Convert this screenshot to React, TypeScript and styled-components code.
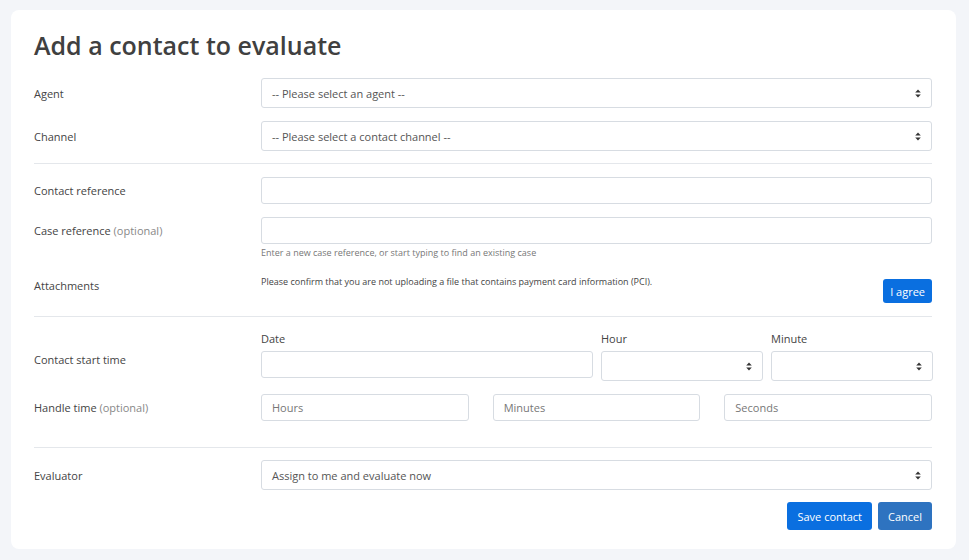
import styled, { createGlobalStyle } from "styled-components";

const GlobalStyle = createGlobalStyle`
  html, body {
    margin: 0;
    padding: 0;
    background: #f3f5f9;
    font-family: "Open Sans", "Liberation Sans", sans-serif;
    color: #444;
  }
  * { box-sizing: border-box; }
`;

const Page = styled.div`
  padding: 10px 13px 11px 11px;
  height: 560px;
`;

const Card = styled.div`
  background: #fff;
  border-radius: 8px;
  padding: 20px 24px 19px 23px;
  height: 539px;
`;

const Title = styled.h1`
  margin: 0 0 18px;
  font-size: 25px;
  font-weight: 600;
  color: #404040;
  line-height: 30px;
`;

const Row = styled.div<{ $mt?: number }>`
  display: grid;
  grid-template-columns: 227px 1fr;
  align-items: center;
  margin-top: ${({ $mt }) => $mt ?? 0}px;
`;

const Label = styled.div<{ $top?: number }>`
  font-size: 11px;
  color: #444;
  ${({ $top }) => ($top !== undefined ? `align-self: start; margin-top: ${$top}px;` : "")}
`;

const Optional = styled.span`
  color: #888;
`;

const Divider = styled.hr<{ $mt: number; $mb: number }>`
  border: 0;
  border-top: 1px solid #e4e7eb;
  margin: ${({ $mt, $mb }) => `${$mt}px 0 ${$mb}px`};
`;

const SelectBox = styled.div<{ $h?: number }>`
  height: ${({ $h }) => $h ?? 30}px;
  border: 1px solid #d7dce2;
  border-radius: 3px;
  display: flex;
  align-items: center;
  justify-content: space-between;
  padding: 0 10px 0 10px;
  font-size: 11px;
  color: #555;
  background: #fff;
`;

const TextBox = styled.div<{ $h?: number }>`
  height: ${({ $h }) => $h ?? 27}px;
  border: 1px solid #d7dce2;
  border-radius: 3px;
  display: flex;
  align-items: center;
  padding: 0 10px;
  font-size: 11px;
  color: #777;
  background: #fff;
`;

const Help = styled.div`
  font-size: 9px;
  color: #777;
  margin-top: 2px;
`;

const AttachRow = styled.div`
  display: flex;
  justify-content: space-between;
  align-items: flex-start;
`;

const Notice = styled.div`
  font-size: 9px;
  color: #444;
  margin-top: 3px;
`;

const Button = styled.button<{ $variant?: "primary" | "secondary" }>`
  font-family: inherit;
  border: 0;
  border-radius: 3px;
  color: #fff;
  font-size: 11px;
  height: 28px;
  padding: 0 10px;
  background: ${({ $variant }) => ($variant === "secondary" ? "#2e73c0" : "#0a6fe0")};
  cursor: pointer;
`;

const SmallButton = styled(Button)`
  height: 24px;
  padding: 0 7px;
  margin-top: 7px;
`;

const TimeGrid = styled.div`
  display: grid;
  grid-template-columns: 332px 162px 162px;
  column-gap: 8px;
  align-items: start;
`;

const Field = styled.div`
  display: flex;
  flex-direction: column;
`;

const FieldLabel = styled.div`
  font-size: 11px;
  color: #444;
  margin-bottom: 5px;
`;

const HandleGrid = styled.div`
  display: grid;
  grid-template-columns: 1fr 1fr 1fr;
  column-gap: 24px;
`;

const Actions = styled.div`
  display: flex;
  justify-content: flex-end;
  gap: 6px;
  margin-top: 12px;
`;

const Caret = () => (
  <svg width="6" height="9" viewBox="0 0 6 9" aria-hidden="true">
    <path d="M3 0.5 L5.8 3.6 L0.2 3.6 Z" fill="#333" />
    <path d="M0.2 5.4 L5.8 5.4 L3 8.5 Z" fill="#333" />
  </svg>
);

const Select = ({ text, h }: { text?: string; h?: number }) => (
  <SelectBox $h={h}>
    <span>{text}</span>
    <Caret />
  </SelectBox>
);

export default function App() {
  return (
    <>
      <GlobalStyle />
      <Page>
        <Card>
          <Title>Add a contact to evaluate</Title>
          <Row>
            <Label>Agent</Label>
            <Select text="-- Please select an agent --" />
          </Row>
          <Row $mt={13}>
            <Label>Channel</Label>
            <Select text="-- Please select a contact channel --" />
          </Row>
          <Divider $mt={12} $mb={13} />
          <Row>
            <Label>Contact reference</Label>
            <TextBox />
          </Row>
          <Row $mt={13}>
            <Label>
              Case reference <Optional>(optional)</Optional>
            </Label>
            <TextBox />
          </Row>
          <Row>
            <div />
            <Help>Enter a new case reference, or start typing to find an existing case</Help>
          </Row>
          <Row $mt={13}>
            <Label $top={6}>Attachments</Label>
            <AttachRow>
              <Notice>
                Please confirm that you are not uploading a file that contains payment card
                information (PCI).
              </Notice>
              <SmallButton>I agree</SmallButton>
            </AttachRow>
          </Row>
          <Divider $mt={13} $mb={14} />
          <Row>
            <Label $top={21}>Contact start time</Label>
            <TimeGrid>
              <Field>
                <FieldLabel>Date</FieldLabel>
                <TextBox />
              </Field>
              <Field>
                <FieldLabel>Hour</FieldLabel>
                <Select />
              </Field>
              <Field>
                <FieldLabel>Minute</FieldLabel>
                <Select />
              </Field>
            </TimeGrid>
          </Row>
          <Row $mt={13}>
            <Label>
              Handle time <Optional>(optional)</Optional>
            </Label>
            <HandleGrid>
              <TextBox>Hours</TextBox>
              <TextBox>Minutes</TextBox>
              <TextBox>Seconds</TextBox>
            </HandleGrid>
          </Row>
          <Divider $mt={26} $mb={12} />
          <Row>
            <Label>Evaluator</Label>
            <Select text="Assign to me and evaluate now" />
          </Row>
          <Actions>
            <Button>Save contact</Button>
            <Button $variant="secondary">Cancel</Button>
          </Actions>
        </Card>
      </Page>
    </>
  );
}
